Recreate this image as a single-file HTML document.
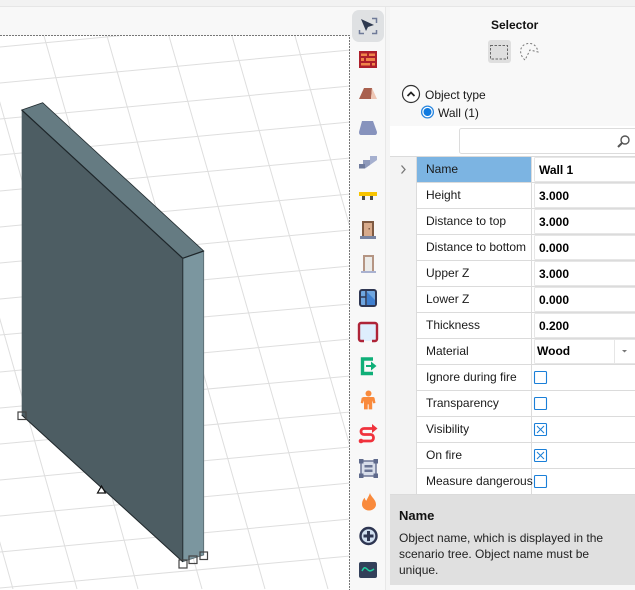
<!DOCTYPE html>
<html><head><meta charset="utf-8"><style>
html,body{margin:0;padding:0;width:635px;height:590px;overflow:hidden;background:#f8f8f8}
body{position:relative;font-family:"Liberation Sans",sans-serif;font-size:12px;color:#1a1a1a}
svg{position:absolute;left:0;top:0}
.t{position:absolute;white-space:nowrap;line-height:16px}
.l{left:426px}
.v{left:539px;font-weight:bold;color:#000}
</style></head><body>
<svg width="635" height="590" viewBox="0 0 635 590" xmlns="http://www.w3.org/2000/svg">
<defs><clipPath id="c"><rect x="0" y="36" width="349" height="554"/></clipPath></defs>
<rect width="635" height="590" fill="#f8f8f8"/>
<rect width="635" height="6" fill="#f2f2f2"/><rect y="6" width="635" height="1" fill="#e6e6e6"/>
<rect x="0" y="36" width="349" height="554" fill="#fff"/>
<g clip-path="url(#c)" stroke="#dedede" stroke-width="1" fill="none">
<path d="M0 47L350 14M0 83L350 50M0 119L350 86M0 155L350 122M0 191L350 158M0 227L350 194M0 263L350 230M0 299L350 266M0 335L350 304M0 372L350 339M0 408L350 376M0 444L350 412M0 480L350 447M0 516L350 483M0 552L350 519M0 588L350 556"/>
<path d="M-143 36L13 589M-81 36L77 589M-19 36L138 589M44 36L202 589M107 36L265 589M169 36L328 589M232 36L391 589M295 36L454 589"/>
</g>
<path d="M0 35.5H349.5V590" fill="none" stroke="#777" stroke-width="1" stroke-dasharray="2 1"/>
<polygon points="21.7,110 42.7,102.7 203.7,251 182.7,258.3" fill="#657b82" stroke="#222c30" stroke-width=".8"/>
<polygon points="182.7,258.3 203.7,251 203.7,555 182.7,561.7" fill="#7b969f" stroke="#55666c" stroke-width=".8"/>
<polygon points="21.7,110 182.7,258.3 182.7,561.7 21.7,415" fill="#4d5d63"/>
<path d="M21.7 110L182.7 258.3" stroke="#1e262a" stroke-width="1.2" fill="none"/>
<path d="M182.7 258.3L203.7 251" stroke="#1e262a" stroke-width="1.2" fill="none"/>
<path d="M182.7 258.3V561.7" stroke="#2d383c" stroke-width="1.2" fill="none"/>
<path d="M21.7 415L182.7 561.7" stroke="#1e262a" stroke-width="1" fill="none"/>
<g fill="none" stroke="#444" stroke-width="1.2">
<rect x="18" y="412" width="8" height="7.500"/><rect x="179" y="560" width="8" height="8"/><rect x="189" y="556" width="8" height="7.500"/><rect x="200" y="552" width="7.500" height="7.500"/>
<path d="M101.500 486L105.500 493H97.500Z" stroke="#111" fill="#fff" fill-opacity=".4"/>
</g>
<!-- toolbar separator -->
<rect x="385" y="7" width="1" height="583" fill="#e8e8e8"/>
<rect x="386" y="7" width="4" height="583" fill="#f5f5f5"/>
<!-- select tool -->
<rect x="352" y="10" width="32" height="32" rx="7" fill="#dfe1e3"/>
<path d="M361 19L374 25L368 27L366 31Z" fill="#2f3a50"/>
<path d="M372 18.500h4.500v4.500M359.500 30v3.500h4.500M372 33.500h4.500V30" fill="none" stroke="#6f7a98" stroke-width="1.500"/>
<!-- brick -->
<rect x="359" y="51" width="18" height="17" fill="#ad1f2b"/>
<path d="M361 53.500h6v2.500h-6zM369 53.500h6v2.500h-6zM361 58h3v3h-3zM366 58h9v3h-9zM361 63h9v2.500h-9zM372 63h3v2.500h-3z" fill="#f0854a"/>
<!-- roof -->
<polygon points="359,99 364,88 372,88 371,99" fill="#a9604e"/>
<polygon points="372,88 377,99 371,99" fill="#eec6b4"/>
<!-- slab -->
<path d="M362 121H373L377 132Q377 135 375 135H361Q359 135 359 132Z" fill="#8793bd"/>
<!-- stairs -->
<polygon points="370,156 377,156 377,160 370,165" fill="#a6b0cf"/>
<polygon points="363,160 370,160 370,165 365,168.500 363,168.500" fill="#8f9abb"/>
<polygon points="359,164 365,164 365,168.500 359,168.500" fill="#6e7a9c"/>
<!-- beam -->
<rect x="359" y="192" width="18" height="4" fill="#f8c400"/>
<path d="M362 196h3v4h-3zM370 196h3v4h-3z" fill="#4c4c4c"/>
<!-- door -->
<rect x="362" y="221" width="12" height="15" fill="#7f5a42"/><rect x="364" y="223" width="8" height="13" fill="#d8ab8c"/>
<rect x="368.500" y="228" width="1.500" height="1.500" fill="#7f5a42"/><rect x="360" y="236" width="16" height="3" fill="#7884a2"/>
<!-- door 2 -->
<rect x="363" y="255" width="11" height="16" fill="#b59583"/><rect x="365" y="257" width="7" height="14" fill="#ecebe8"/>
<rect x="361" y="271" width="15" height="2" fill="#aab2d0"/>
<!-- window -->
<rect x="360" y="290" width="16" height="16" rx="2" fill="#6fa6e0" stroke="#2e3652" stroke-width="2"/>
<path d="M366 291V305M360 297h6" stroke="#2e3652" stroke-width="1.500"/>
<polygon points="367,292 375,300 375,305 367,305" fill="#3f7fcf"/>
<!-- opening -->
<path d="M364 341h-3a2 2 0 0 1-2-2V325a2 2 0 0 1 2-2h14a2 2 0 0 1 2 2v14a2 2 0 0 1-2 2h-3" fill="#deeefd" stroke="#ae2438" stroke-width="2.400"/>
<!-- exit -->
<path d="M373 359h-10.500v14.500H373" fill="none" stroke="#0faf78" stroke-width="3.400"/>
<path d="M366 365h5v-3.500l5.500 4.500-5.500 4.500v-3.500h-5z" fill="#0faf78"/>
<!-- person -->
<circle cx="368.500" cy="393.500" r="3" fill="#f98a3c"/>
<path d="M363.500 397h10l1 .8 1 5.200-2.300.4-1-3v9h-3.500v-5h-1v5H364v-9l-1 3-2.300-.4 1-5.200z" fill="#f98a3c"/>
<!-- route -->
<path d="M361 441h9.500c4 0 4-6.500 0-6.500H364c-4 0-4-6 0-6h9" fill="none" stroke="#f0323c" stroke-width="2.800"/>
<path d="M372 424l5.500 4.500-5.500 4.500z" fill="#f0323c"/><circle cx="361" cy="441" r="2.300" fill="#f0323c"/>
<!-- room -->
<rect x="361" y="461" width="15" height="15" fill="#d8deea" stroke="#6a7494" stroke-width="1.500"/>
<path d="M359 459h4.500v4.500H359zM373.500 459h4.500v4.500h-4.500zM359 473.500h4.500v4.500H359zM373.500 473.500h4.500v4.500h-4.500z" fill="#5f6a8c"/>
<path d="M364.500 465h8v2.500h-8zM364.500 469.500h8v2.500h-8z" fill="#6a7494"/>
<!-- fire -->
<path d="M370 493c1 4 6 6.500 6 11.500 0 3.500-3.500 6-7 6s-7-2.500-7-6c0-3.500 1.500-5.500 2.700-6.700.3 1.500.8 2.500 1.600 3 1.200-2.800 2.700-4.800 3.700-7.800z" fill="#f98a3c"/>
<!-- add -->
<circle cx="368.500" cy="536" r="8" fill="#d0dff0" stroke="#2e3652" stroke-width="2.400"/>
<path d="M368.500 531v10M363.500 536h10" stroke="#2e3652" stroke-width="3"/>
<!-- monitor -->
<rect x="359" y="562" width="18" height="16" rx="2" fill="#33405a"/>
<path d="M362 571c2-4 3-4 5-2s3 3 7 0" fill="none" stroke="#20d0a0" stroke-width="1.500"/>
<!-- selector icons -->
<rect x="488" y="40" width="23" height="23" rx="3" fill="#dfdfdf"/>
<rect x="490.500" y="45.500" width="17" height="13.500" fill="none" stroke="#666" stroke-dasharray="2.500 1.500"/>
<path d="M525 60C519 55 519 46 526 44C533 42 537 46 538 52L530 50L525 60Z" fill="none" stroke="#777" stroke-dasharray="2 2"/>
<!-- object type -->
<circle cx="411" cy="94" r="8.500" fill="#fff" stroke="#333" stroke-width="1.200"/>
<path d="M407.500 96L411 92.500L414.500 96" fill="none" stroke="#222" stroke-width="1.800"/>
<circle cx="427.500" cy="112" r="5.900" fill="#fff" stroke="#2a86de" stroke-width="1.300"/>
<circle cx="427.500" cy="112" r="4" fill="#0f7ae0"/>
<!-- white table area -->
<rect x="390" y="126" width="245" height="369" fill="#fff"/>
<rect x="459.500" y="128.500" width="180" height="25" rx="2" fill="#fff" stroke="#dcdcdc"/>
<circle cx="625" cy="140" r="4" fill="none" stroke="#555" stroke-width="1.400"/>
<path d="M622 143L618 147" stroke="#555" stroke-width="2"/>
<rect x="390" y="156" width="26" height="339" fill="#f3f3f3"/>
<path d="M401.500 165.500L405 169.500L401.500 173.500" fill="none" stroke="#777" stroke-width="1.300"/>
<rect x="417" y="157" width="114" height="25" fill="#7cb4e2"/>
<g fill="#dbdbdb">
<rect x="390" y="156" width="245" height="1"/>
<rect x="416" y="182" width="219" height="1"/><rect x="416" y="208" width="219" height="1"/><rect x="416" y="234" width="219" height="1"/><rect x="416" y="260" width="219" height="1"/><rect x="416" y="286" width="219" height="1"/><rect x="416" y="312" width="219" height="1"/><rect x="416" y="338" width="219" height="1"/><rect x="416" y="364" width="219" height="1"/><rect x="416" y="390" width="219" height="1"/><rect x="416" y="416" width="219" height="1"/><rect x="416" y="442" width="219" height="1"/><rect x="416" y="468" width="219" height="1"/><rect x="390" y="494" width="245" height="1"/>
<rect x="416" y="156" width="1" height="339"/><rect x="531" y="156" width="1" height="339"/>
</g>
<g fill="#fff" stroke="#e6e6e6">
<rect x="534.500" y="157.500" width="105" height="24" rx="1"/><rect x="534.500" y="183.500" width="105" height="24" rx="1"/><rect x="534.500" y="209.500" width="105" height="24" rx="1"/><rect x="534.500" y="235.500" width="105" height="24" rx="1"/><rect x="534.500" y="261.500" width="105" height="24" rx="1"/><rect x="534.500" y="287.500" width="105" height="24" rx="1"/><rect x="534.500" y="313.500" width="105" height="24" rx="1"/><rect x="534.500" y="339.500" width="105" height="24" rx="1"/>
</g>
<rect x="614" y="340" width="1" height="23" fill="#e6e6e6"/>
<path d="M622 350h5l-2.500 2.500z" fill="#777"/>
<g fill="#fff" stroke="#1a7fd8" stroke-width="1.100">
<rect x="534.500" y="371.500" width="12" height="12" rx="1"/><rect x="534.500" y="397.500" width="12" height="12" rx="1"/><rect x="534.500" y="423.500" width="12" height="12" rx="1"/><rect x="534.500" y="449.500" width="12" height="12" rx="1"/><rect x="534.500" y="475.500" width="12" height="12" rx="1"/>
</g>
<path d="M537 426l7 7m0-7l-7 7M537 452l7 7m0-7l-7 7" stroke="#1a7fd8" stroke-width="1"/>
<rect x="390" y="495" width="245" height="90" fill="#e0e0e0"/>
</svg>
<div class="t" style="left:491px;top:17px;font-weight:bold;color:#111">Selector</div>
<div class="t" style="left:425px;top:87px">Object type</div>
<div class="t" style="left:438px;top:105px">Wall (1)</div>
<div class="t l" style="top:161px">Name</div>
<div class="t l" style="top:187px">Height</div>
<div class="t l" style="top:213px">Distance to top</div>
<div class="t l" style="top:239px">Distance to bottom</div>
<div class="t l" style="top:265px">Upper Z</div>
<div class="t l" style="top:291px">Lower Z</div>
<div class="t l" style="top:317px">Thickness</div>
<div class="t l" style="top:343px">Material</div>
<div class="t l" style="top:369px">Ignore during fire</div>
<div class="t l" style="top:395px">Transparency</div>
<div class="t l" style="top:421px">Visibility</div>
<div class="t l" style="top:447px">On fire</div>
<div class="t l" style="top:473px">Measure dangerous</div>
<div class="t v" style="top:162px">Wall 1</div>
<div class="t v" style="top:188px">3.000</div>
<div class="t v" style="top:214px">3.000</div>
<div class="t v" style="top:240px">0.000</div>
<div class="t v" style="top:266px">3.000</div>
<div class="t v" style="top:292px">0.000</div>
<div class="t v" style="top:318px">0.200</div>
<div class="t v" style="left:537px;top:343px">Wood</div>
<div class="t" style="left:399px;top:508px;font-weight:bold;font-size:13px;color:#111">Name</div>
<div class="t" style="left:399px;top:530px;color:#222">Object name, which is displayed in the</div>
<div class="t" style="left:399px;top:546px;color:#222">scenario tree. Object name must be</div>
<div class="t" style="left:399px;top:562px;color:#222">unique.</div>
</body></html>
